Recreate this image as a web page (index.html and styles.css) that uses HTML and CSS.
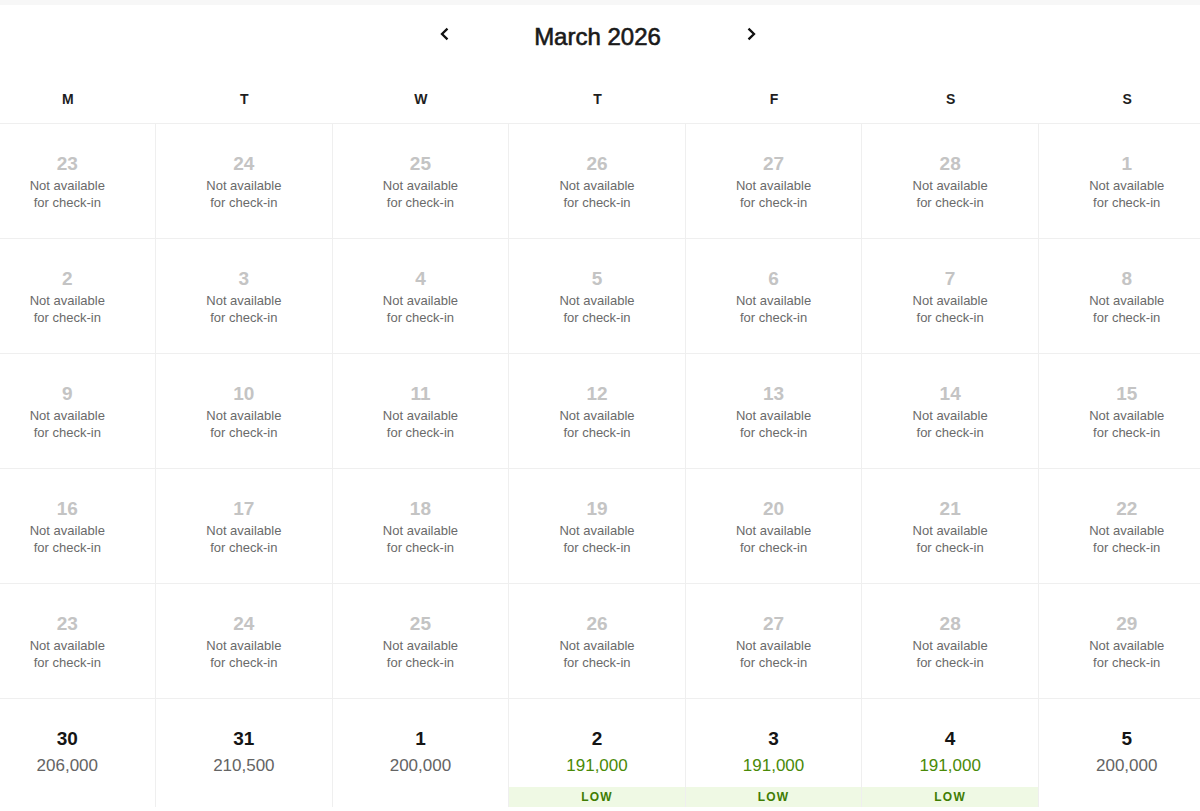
FILE: index.html
```html
<!DOCTYPE html>
<html lang="en">
<head>
<meta charset="utf-8">
<title>March 2026</title>
<link rel="stylesheet" href="styles.css">
</head>
<body>
<div class="topbar"></div>
<div class="calendar">
  <div class="nav">
    <button class="nav-btn" aria-label="Previous month">
      <svg width="16" height="16" viewBox="0 0 16 16"><path d="M10.5 2.6 L5 8 L10.5 13.4" fill="none" stroke="#111" stroke-width="2.3"/></svg>
    </button>
    <h1 class="title">March 2026</h1>
    <button class="nav-btn" aria-label="Next month">
      <svg width="16" height="16" viewBox="0 0 16 16"><path d="M5.5 2.6 L11 8 L5.5 13.4" fill="none" stroke="#111" stroke-width="2.3"/></svg>
    </button>
  </div>
  <div class="weekdays">
    <div>M</div><div>T</div><div>W</div><div>T</div><div>F</div><div>S</div><div>S</div>
  </div>
  <div class="grid">
    <div class="cell"><div class="num">23</div><div class="note">Not available<br>for check-in</div></div>
    <div class="cell"><div class="num">24</div><div class="note">Not available<br>for check-in</div></div>
    <div class="cell"><div class="num">25</div><div class="note">Not available<br>for check-in</div></div>
    <div class="cell"><div class="num">26</div><div class="note">Not available<br>for check-in</div></div>
    <div class="cell"><div class="num">27</div><div class="note">Not available<br>for check-in</div></div>
    <div class="cell"><div class="num">28</div><div class="note">Not available<br>for check-in</div></div>
    <div class="cell"><div class="num">1</div><div class="note">Not available<br>for check-in</div></div>

    <div class="cell"><div class="num">2</div><div class="note">Not available<br>for check-in</div></div>
    <div class="cell"><div class="num">3</div><div class="note">Not available<br>for check-in</div></div>
    <div class="cell"><div class="num">4</div><div class="note">Not available<br>for check-in</div></div>
    <div class="cell"><div class="num">5</div><div class="note">Not available<br>for check-in</div></div>
    <div class="cell"><div class="num">6</div><div class="note">Not available<br>for check-in</div></div>
    <div class="cell"><div class="num">7</div><div class="note">Not available<br>for check-in</div></div>
    <div class="cell"><div class="num">8</div><div class="note">Not available<br>for check-in</div></div>

    <div class="cell"><div class="num">9</div><div class="note">Not available<br>for check-in</div></div>
    <div class="cell"><div class="num">10</div><div class="note">Not available<br>for check-in</div></div>
    <div class="cell"><div class="num">11</div><div class="note">Not available<br>for check-in</div></div>
    <div class="cell"><div class="num">12</div><div class="note">Not available<br>for check-in</div></div>
    <div class="cell"><div class="num">13</div><div class="note">Not available<br>for check-in</div></div>
    <div class="cell"><div class="num">14</div><div class="note">Not available<br>for check-in</div></div>
    <div class="cell"><div class="num">15</div><div class="note">Not available<br>for check-in</div></div>

    <div class="cell"><div class="num">16</div><div class="note">Not available<br>for check-in</div></div>
    <div class="cell"><div class="num">17</div><div class="note">Not available<br>for check-in</div></div>
    <div class="cell"><div class="num">18</div><div class="note">Not available<br>for check-in</div></div>
    <div class="cell"><div class="num">19</div><div class="note">Not available<br>for check-in</div></div>
    <div class="cell"><div class="num">20</div><div class="note">Not available<br>for check-in</div></div>
    <div class="cell"><div class="num">21</div><div class="note">Not available<br>for check-in</div></div>
    <div class="cell"><div class="num">22</div><div class="note">Not available<br>for check-in</div></div>

    <div class="cell"><div class="num">23</div><div class="note">Not available<br>for check-in</div></div>
    <div class="cell"><div class="num">24</div><div class="note">Not available<br>for check-in</div></div>
    <div class="cell"><div class="num">25</div><div class="note">Not available<br>for check-in</div></div>
    <div class="cell"><div class="num">26</div><div class="note">Not available<br>for check-in</div></div>
    <div class="cell"><div class="num">27</div><div class="note">Not available<br>for check-in</div></div>
    <div class="cell"><div class="num">28</div><div class="note">Not available<br>for check-in</div></div>
    <div class="cell"><div class="num">29</div><div class="note">Not available<br>for check-in</div></div>

    <div class="cell open"><div class="num">30</div><div class="price">206,000</div></div>
    <div class="cell open"><div class="num">31</div><div class="price">210,500</div></div>
    <div class="cell open"><div class="num">1</div><div class="price">200,000</div></div>
    <div class="cell open low"><div class="num">2</div><div class="price">191,000</div><div class="tag">LOW</div></div>
    <div class="cell open low"><div class="num">3</div><div class="price">191,000</div><div class="tag">LOW</div></div>
    <div class="cell open low"><div class="num">4</div><div class="price">191,000</div><div class="tag">LOW</div></div>
    <div class="cell open"><div class="num">5</div><div class="price">200,000</div></div>
  </div>
</div>
<div class="bottombar"></div>
</body>
</html>
```
FILE: styles.css
```css
* { box-sizing: border-box; }
html, body {
  margin: 0;
  padding: 0;
  background: #fff;
  overflow: hidden;
}
body {
  font-family: "Liberation Sans", Arial, sans-serif;
  color: #222;
  width: 1200px;
  height: 811px;
}
.topbar {
  height: 5px;
  background: #f7f7f7;
}
.calendar {
  width: 1236px;
  margin-left: -20.5px;
}
.nav {
  display: flex;
  justify-content: center;
  padding-top: 16px;
  height: 47px;
}
.nav-btn {
  width: 40px;
  height: 31px;
  border: 0;
  background: none;
  padding: 5px 0 0;
  margin: 0;
  display: flex;
  justify-content: center;
  align-items: flex-start;
}
.title {
  width: 266px;
  margin: 0;
  text-align: center;
  font-size: 24px;
  line-height: 31px;
  font-weight: normal;
  color: #1a1a1a;
  -webkit-text-stroke: 0.6px #1a1a1a;
}
.weekdays {
  display: grid;
  grid-template-columns: repeat(7, 1fr);
  padding: 37px 0 14px;
  border-bottom: 1px solid #efefef;
  font-size: 14px;
  line-height: 20px;
  font-weight: bold;
  color: #1e1e1e;
  text-align: center;
}
.grid {
  display: grid;
  grid-template-columns: repeat(7, 1fr);
  grid-auto-rows: 115px;
}
.cell {
  border-right: 1px solid #efefef;
  border-bottom: 1px solid #efefef;
  padding-top: 28px;
  display: flex;
  flex-direction: column;
  align-items: center;
  text-align: center;
}
.num {
  font-size: 19px;
  line-height: 24px;
  font-weight: bold;
  color: #c4c4c4;
}
.note {
  margin-top: 1px;
  font-size: 13px;
  line-height: 17px;
  color: #6a6a6a;
}
.cell.open {
  height: 108px;
  border-bottom: 0;
}
.open .num {
  color: #151515;
}
.price {
  margin-top: 4px;
  font-size: 17px;
  line-height: 21px;
  color: #646464;
}
.low .price {
  color: #4a8a08;
}
.tag {
  margin-top: auto;
  align-self: stretch;
  height: 20px;
  background: #eff9e4;
  color: #3f7d03;
  font-size: 12px;
  font-weight: bold;
  line-height: 20px;
  letter-spacing: 1.2px;
}
.bottombar {
  height: 4px;
  background: #e4e4e4;
}
```
